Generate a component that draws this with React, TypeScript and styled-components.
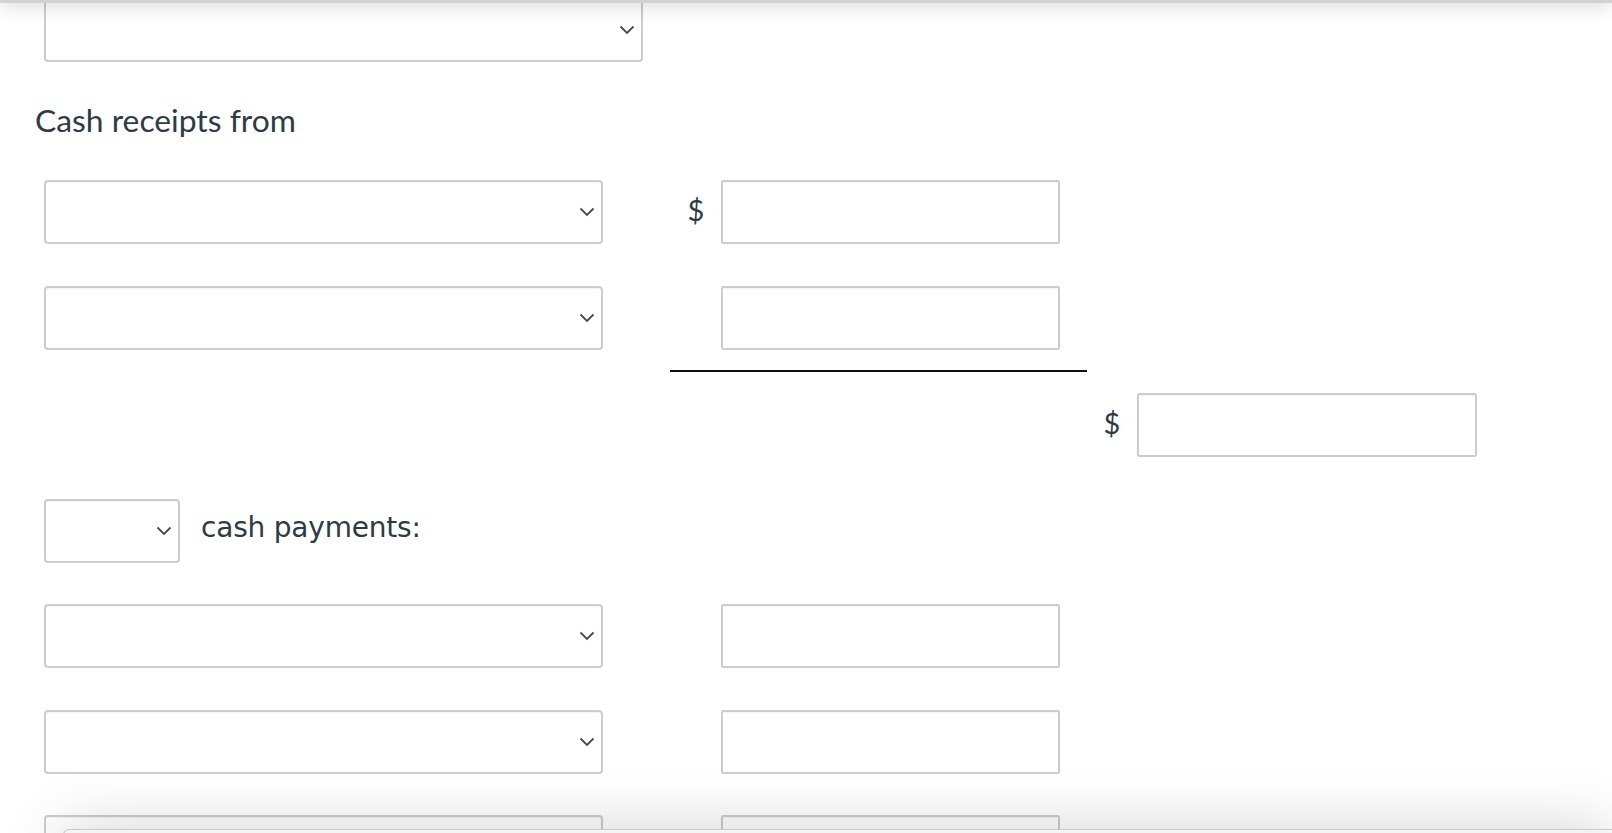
import React from 'react'
import styled, { createGlobalStyle } from 'styled-components'

const GlobalStyle = createGlobalStyle`
    html, body {
        margin: 0;
        padding: 0;
        background: #ffffff;
        overflow: hidden;
    }
    body {
        font-family: Lato, "Noto Sans", sans-serif;
        color: #2d3b45;
    }
`

const Page = styled.div`
    display: flex;
    flex-direction: column;
    padding-left: 35px;
    margin-top: -2px;
`

// header bar sits just above the viewport, only its bottom edge and shadow show
const Header = styled.div`
    position: fixed;
    top: -60px;
    left: 0;
    right: 0;
    height: 63px;
    background: #d2d2d2;
    box-shadow: 0 2px 20px rgba(0, 0, 0, 0.16);
    z-index: 5;
`

const Footer = styled.div`
    position: fixed;
    top: 829px;
    left: 62px;
    right: 0;
    height: 200px;
    background: #f4f4f4;
    border-top: 1px solid #c9c9c9;
    border-left: 1px solid #c9c9c9;
    border-radius: 8px 0 0 0;
    box-shadow: 0 -4px 60px rgba(0, 0, 0, 0.16);
    z-index: 5;
`

const Row = styled.div<{ $gap?: number }>`
    display: flex;
    align-items: center;
    padding-left: 9px;
    margin-top: ${p => (p.$gap ?? 42)}px;
    height: 64px;
`

const SelectBox = styled.div<{ $width: number }>`
    position: relative;
    box-sizing: border-box;
    width: ${p => p.$width}px;
    height: 64px;
    flex: none;
    background: #ffffff;
    border: 2px solid #cdcdcd;
    border-radius: 4px;
    box-shadow: inset 0 1px 1px rgba(0, 0, 0, 0.05);
`

const Chevron = styled.svg`
    position: absolute;
    right: 6px;
    top: 50%;
    margin-top: -5px;
`

const Dollar = styled.span<{ $hidden?: boolean; $lead: number }>`
    width: 18px;
    margin-left: ${p => p.$lead}px;
    margin-right: 16px;
    margin-top: -4px;
    flex: none;
    font-size: 29px;
    line-height: 36px;
    text-align: center;
    visibility: ${p => (p.$hidden ? 'hidden' : 'visible')};
`

const Amount = styled.div<{ $width: number }>`
    box-sizing: border-box;
    width: ${p => p.$width}px;
    height: 64px;
    flex: none;
    background: #ffffff;
    border: 2px solid #cdcdcd;
    border-radius: 2px;
    box-shadow: inset 0 1px 1px rgba(0, 0, 0, 0.05);
`

const Heading = styled.p`
    margin: 40px 0 0 0;
    font-size: 31.8px;
    line-height: 36px;
`

const InlineLabel = styled.span`
    margin-left: 21px;
    margin-top: -8px;
    font-family: "DejaVu Sans", Verdana, sans-serif;
    font-size: 28px;
    letter-spacing: -0.2px;
    color: #2d3b45;
`

const Rule = styled.div`
    height: 2px;
    width: 417px;
    margin: 20px 0 0 635px;
    background: #111111;
`

function Select({ width }: { width: number }) {
    return (
        <SelectBox $width={width}>
            <Chevron width="16" height="10" viewBox="0 0 16 10">
                <polyline points="1.5,1.5 8,8 14.5,1.5" fill="none" stroke="#4a4a4a" strokeWidth="1.8" />
            </Chevron>
        </SelectBox>
    )
}

function App() {
    return (
        <>
            <GlobalStyle />
            <Header />
            <Page>
                <Row $gap={0}>
                    <Select width={599} />
                </Row>
                <Heading>Cash receipts from</Heading>
                <Row>
                    <Select width={559} />
                    <Dollar $lead={84}>$</Dollar>
                    <Amount $width={339} />
                </Row>
                <Row>
                    <Select width={559} />
                    <Dollar $lead={84} $hidden>$</Dollar>
                    <Amount $width={339} />
                </Row>
                <Rule />
                <Row $gap={21}>
                    <Dollar $lead={1059}>$</Dollar>
                    <Amount $width={340} />
                </Row>
                <Row>
                    <Select width={136} />
                    <InlineLabel>cash payments:</InlineLabel>
                </Row>
                <Row $gap={41}>
                    <Select width={559} />
                    <Dollar $lead={84} $hidden>$</Dollar>
                    <Amount $width={339} />
                </Row>
                <Row>
                    <Select width={559} />
                    <Dollar $lead={84} $hidden>$</Dollar>
                    <Amount $width={339} />
                </Row>
                <Row $gap={41}>
                    <Select width={559} />
                    <Dollar $lead={84} $hidden>$</Dollar>
                    <Amount $width={339} />
                </Row>
            </Page>
            <Footer />
        </>
    )
}

export default App
